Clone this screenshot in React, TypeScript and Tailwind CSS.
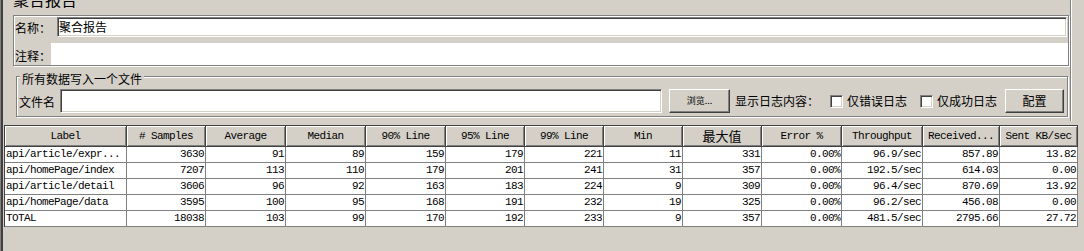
import React from "react";

const cols = [
  "Label",
  "# Samples",
  "Average",
  "Median",
  "90% Line",
  "95% Line",
  "99% Line",
  "Min",
  "最大值",
  "Error %",
  "Throughput",
  "Received...",
  "Sent KB/sec",
];

const rows = [
  ["api/article/expr...", "3630", "91", "89", "159", "179", "221", "11", "331", "0.00%", "96.9/sec", "857.89", "13.82"],
  ["api/homePage/index", "7207", "113", "110", "179", "201", "241", "31", "357", "0.00%", "192.5/sec", "614.03", "0.00"],
  ["api/article/detail", "3606", "96", "92", "163", "183", "224", "9", "309", "0.00%", "96.4/sec", "870.69", "13.92"],
  ["api/homePage/data", "3595", "100", "95", "168", "191", "232", "19", "325", "0.00%", "96.2/sec", "456.08", "0.00"],
  ["TOTAL", "18038", "103", "99", "170", "192", "233", "9", "357", "0.00%", "481.5/sec", "2795.66", "27.72"],
];

function Checkbox() {
  return (
    <div className="w-[13px] h-[13px] shrink-0 bg-white border border-t-[#808080] border-l-[#808080] border-b-white border-r-white shadow-[inset_1px_1px_0_#404040,inset_-1px_-1px_0_#d4d0c8]" />
  );
}

export default function App() {
  return (
    <div className="relative flex flex-col w-[1084px] h-[251px] overflow-hidden bg-[#d4d0c8] text-black text-[12px] font-['Noto_Sans_CJK_SC',sans-serif] shadow-[inset_1px_0_0_#808080,inset_3px_0_0_#404040]">
      {/* top area */}
      <div className="flex flex-col shrink-0 w-[1071px] h-[121px] border-r border-[#808080] shadow-[1px_0_0_#ffffff]">
        <div className="-mt-[9px] ml-[13px] h-[16px] leading-[16px] text-[16px] whitespace-nowrap">
          聚合报告
        </div>

        {/* name / comment panel */}
        <div className="mt-[8px] ml-[13px] w-[1056px] h-[51px] shrink-0 flex flex-col border border-[#808080] shadow-[1px_1px_0_#ffffff,inset_1px_1px_0_#ffffff]">
          <div className="flex items-center h-[20px] mt-[1px] pl-[1px] pr-[1px]">
            <div className="w-[42px] pt-[2px] leading-[14px] whitespace-nowrap">名称：</div>
            <div className="flex-1 h-[20px] flex items-center pl-[1px] bg-white border border-t-[#808080] border-l-[#808080] border-b-white border-r-white shadow-[inset_1px_1px_0_#404040,inset_-1px_-1px_0_#d4d0c8] leading-[14px]">
              聚合报告
            </div>
          </div>
          <div className="flex mt-[6px] h-[22px] pl-[1px]">
            <div className="w-[36px] pt-[6px] leading-[14px] whitespace-nowrap">注释：</div>
            <div className="flex-1 bg-white" />
          </div>
        </div>

        {/* file panel */}
        <div className="relative mt-[10px] ml-[16px] w-[1052px] h-[41px] shrink-0 flex items-start pt-[12px] pl-[2px] border border-[#808080] shadow-[1px_1px_0_#ffffff,inset_1px_1px_0_#ffffff]">
          <span className="absolute left-[3px] top-[-4px] px-[2px] bg-[#d4d0c8] leading-[12px] whitespace-nowrap">
            所有数据写入一个文件
          </span>
          <div className="flex items-center h-[24px]">
            <div className="w-[41px] leading-[14px] pt-[2px] whitespace-nowrap">文件名</div>
            <div className="w-[602px] h-[24px] bg-white border border-t-[#808080] border-l-[#808080] border-b-white border-r-white shadow-[inset_1px_1px_0_#404040,inset_-1px_-1px_0_#d4d0c8]" />
            <div className="ml-[7px] w-[61px] h-[24px] flex items-center justify-center text-[9px] leading-[10px] border border-t-white border-l-white border-r-[#404040] border-b-[#404040] shadow-[inset_-1px_-1px_0_#808080]">
              浏览...
            </div>
            <div className="ml-[5px] w-[84px] leading-[14px] whitespace-nowrap">显示日志内容：</div>
            <div className="ml-[11px]">
              <Checkbox />
            </div>
            <div className="ml-[4px] w-[60px] leading-[14px] whitespace-nowrap">仅错误日志</div>
            <div className="ml-[13px]">
              <Checkbox />
            </div>
            <div className="ml-[4px] w-[60px] leading-[14px] whitespace-nowrap">仅成功日志</div>
            <div className="ml-[8px] w-[59px] h-[24px] flex items-center justify-center leading-[14px] border border-t-white border-l-white border-r-[#404040] border-b-[#404040] shadow-[inset_-1px_-1px_0_#808080]">
              配置
            </div>
          </div>
        </div>
      </div>

      {/* table */}
      <div className="mt-[4px] ml-[4px] w-[1074px] shrink-0 border-l border-t border-[#404040]">
        <div className="grid grid-cols-[122px_79px_80px_80px_80px_79px_79px_79px_79px_80px_81px_77px_78px] font-['Liberation_Mono',monospace] text-[11px] tracking-[-0.6px]">
          {cols.map((c) => (
            <div
              key={c}
              className={
                "h-[21px] flex items-center justify-center whitespace-nowrap overflow-hidden border-r border-b border-r-[#404040] border-b-[#404040] shadow-[inset_1px_1px_0_#ffffff,inset_-1px_-1px_0_#808080] " +
                (c === "最大值"
                  ? "font-['Noto_Sans_CJK_SC',sans-serif] text-[13px] tracking-normal"
                  : "")
              }
            >
              {c}
            </div>
          ))}
          {rows.map((r, ri) =>
            r.map((v, ci) => (
              <div
                key={ri + "-" + ci}
                className={
                  "h-[16px] leading-[15px] bg-white whitespace-nowrap overflow-hidden border-r border-b border-[#808080] " +
                  (ci === 0 ? "text-left pl-[1px]" : "text-right pr-[1px]")
                }
              >
                {v}
              </div>
            ))
          )}
        </div>
      </div>
    </div>
  );
}
